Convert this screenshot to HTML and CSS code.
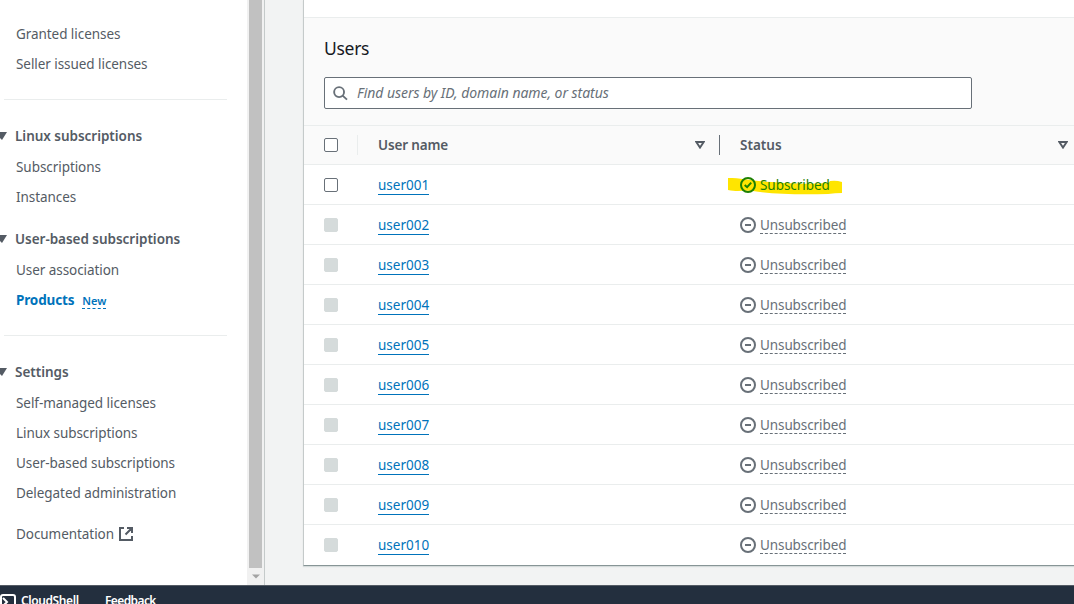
FILE: index.html
```html
<!DOCTYPE html>
<html lang="en">
<head>
<meta charset="utf-8">
<title>License Manager</title>
<link rel="stylesheet" href="styles.css">
</head>
<body>
<svg class="defs" width="0" height="0" aria-hidden="true">
  <symbol id="minus" viewBox="0 0 16 16"><circle cx="8" cy="8" r="7" fill="none" stroke="currentColor" stroke-width="2"/><path d="M5 8h6" stroke="currentColor" stroke-width="2"/></symbol>
  <symbol id="sort" viewBox="0 0 10 8"><path d="M1.3 1h7.4L5 6.6z" fill="none" stroke="currentColor" stroke-width="1.9"/></symbol>
</svg>
<div class="main">
  <aside class="side">
    <nav class="nav">
      <a class="item">Granted licenses</a>
      <a class="item">Seller issued licenses</a>
      <hr class="rule">
      <h3 class="group">Linux subscriptions</h3>
      <a class="item">Subscriptions</a>
      <a class="item">Instances</a>
      <h3 class="group next">User-based subscriptions</h3>
      <a class="item">User association</a>
      <a class="item active">Products <span class="new">New</span></a>
      <hr class="rule">
      <h3 class="group">Settings</h3>
      <a class="item">Self-managed licenses</a>
      <a class="item">Linux subscriptions</a>
      <a class="item">User-based subscriptions</a>
      <a class="item">Delegated administration</a>
      <a class="item docs">Documentation<svg class="ext" viewBox="0 0 14 14" fill="none" stroke="currentColor" stroke-width="2"><path d="M5 1H1v12h12V9M8 1h5v5M13 1L6.5 7.5"/></svg></a>
    </nav>
    <div class="scroll"><div class="thumb"></div><svg class="down" viewBox="0 0 8 5"><path d="M0 .5h8L4 4.5z" fill="#a3a3a3"/></svg></div>
  </aside>
  <main class="content">
    <section class="panel">
      <div class="above"></div>
      <header class="head">
        <h2 class="title">Users</h2>
        <div class="search">
          <svg class="glass" viewBox="0 0 16 16" fill="none" stroke="#687078" stroke-width="2"><circle cx="6.5" cy="6.5" r="5.3"/><path d="M10.3 10.3l4.6 4.3"/></svg>
          <span class="hint">Find users by ID, domain name, or status</span>
        </div>
      </header>
      <div class="row columns">
        <span class="box"></span><span class="split"></span>
        <span class="name">User name</span>
        <svg class="sort"><use href="#sort"/></svg><span class="bar"></span>
        <span class="status-label">Status</span>
        <svg class="sort"><use href="#sort"/></svg>
      </div>
      <div class="row"><span class="box"></span><div class="user"><a class="link">user001</a></div>
        <div class="status ok">
          <svg class="marker" viewBox="0 0 116 19"><path d="M0 1C14 1 24 4 44 5C66 7 82 7 101 6L103 4Q109 3 115 5V16Q108 16 101 17C72 18 43 17 25 14C16 13 10 15 0 13z" fill="#ffe500"/></svg>
          <svg class="icon" viewBox="0 0 16 16" fill="none" stroke="currentColor" stroke-width="2"><circle cx="8" cy="8" r="7"/><path d="M4.7 8l2.4 2.2L11.2 5.6"/></svg>
          <span class="state">Subscribed</span>
        </div></div>
      <div class="row"><span class="box off"></span><div class="user"><a class="link">user002</a></div><div class="status"><svg class="icon"><use href="#minus"/></svg><span class="state dash">Unsubscribed</span></div></div>
      <div class="row"><span class="box off"></span><div class="user"><a class="link">user003</a></div><div class="status"><svg class="icon"><use href="#minus"/></svg><span class="state dash">Unsubscribed</span></div></div>
      <div class="row"><span class="box off"></span><div class="user"><a class="link">user004</a></div><div class="status"><svg class="icon"><use href="#minus"/></svg><span class="state dash">Unsubscribed</span></div></div>
      <div class="row"><span class="box off"></span><div class="user"><a class="link">user005</a></div><div class="status"><svg class="icon"><use href="#minus"/></svg><span class="state dash">Unsubscribed</span></div></div>
      <div class="row"><span class="box off"></span><div class="user"><a class="link">user006</a></div><div class="status"><svg class="icon"><use href="#minus"/></svg><span class="state dash">Unsubscribed</span></div></div>
      <div class="row"><span class="box off"></span><div class="user"><a class="link">user007</a></div><div class="status"><svg class="icon"><use href="#minus"/></svg><span class="state dash">Unsubscribed</span></div></div>
      <div class="row"><span class="box off"></span><div class="user"><a class="link">user008</a></div><div class="status"><svg class="icon"><use href="#minus"/></svg><span class="state dash">Unsubscribed</span></div></div>
      <div class="row"><span class="box off"></span><div class="user"><a class="link">user009</a></div><div class="status"><svg class="icon"><use href="#minus"/></svg><span class="state dash">Unsubscribed</span></div></div>
      <div class="row last"><span class="box off"></span><div class="user"><a class="link">user010</a></div><div class="status"><svg class="icon"><use href="#minus"/></svg><span class="state dash">Unsubscribed</span></div></div>
    </section>
  </main>
</div>
<footer class="foot">
  <svg class="shell" viewBox="0 0 16 16" fill="none" stroke="#fff" stroke-width="2"><rect x="1" y="1" width="14" height="14" rx="2"/><path d="M3 4l4 4-4 4M8 11.5h5"/></svg>
  <span class="cloud">CloudShell</span><span class="feedback">Feedback</span>
</footer>
</body>
</html>
```
FILE: styles.css
```css
* { box-sizing: border-box; }
body { margin: 0; width: 1074px; height: 604px; overflow: hidden; font: 13.5px/20px "Noto Sans", sans-serif; letter-spacing: -.06px; color: #545b64; background: #f2f3f3; }
.defs { position: absolute; }
svg { display: block; flex: none; }
.main { display: flex; height: 585px; }
.side { display: flex; width: 265px; background: #fff; border-right: 1px solid #c5caca; }
.nav { width: 247px; padding-top: 19px; }
.item { display: flex; align-items: center; height: 30px; padding-left: 16px; white-space: nowrap; }
.rule { height: 1px; margin: 20px 20px 21px 4px; border: 0; background: #eaeded; }
.group { display: flex; align-items: center; height: 30px; margin: 0 0 1px; font-size: 13.5px; font-weight: 600; letter-spacing: -.03px; }
.group::before { content: ""; width: 7px; height: 8px; margin-right: 8px; background: #545b64; clip-path: polygon(0 0, 100% 0, 2px 100%, 0 75%); }
.next { margin-top: 12px; }
.active { color: #0073bb; font-weight: 700; letter-spacing: -.15px; }
.new { margin-left: 8px; font-size: 11px; line-height: 14px; margin-top: 3px; border-bottom: 1px dashed #0073bb; letter-spacing: 0; font-weight: 600; }
.docs { margin-top: 11px; }
.ext { width: 14px; height: 14px; margin-left: 5px; }
.scroll { width: 17px; background: #f1f1f1; padding-left: 2px; }
.thumb { width: 13px; height: 568px; background: #c1c1c1; }
.down { width: 8px; height: 5px; margin: 6px 0 0 3px; }
.content { flex: 1; padding-left: 38px; }
.panel { height: 566px; border-left: 1px solid #c5caca; border-bottom: 1px solid #879596; background: #fff; box-shadow: 0 1px 1px #d5dbdb; }
.above { height: 17px; }
.head { height: 108px; padding: 20px 20px 0; background: #fafafa; border-top: 1px solid #eaeded; }
.title { margin: 0; font-size: 17.5px; line-height: 20px; font-weight: 400; letter-spacing: -.3px; color: #16191f; }
.search { display: flex; align-items: center; width: 648px; height: 32px; margin-top: 19px; padding-left: 8px; border: 1px solid #687078; border-radius: 2px; background: #fff; }
.glass { width: 15px; height: 15px; }
.hint { margin-left: 9px; font-size: 14px; letter-spacing: -.05px; font-style: italic; color: #687078; white-space: nowrap; }
.row { display: flex; align-items: center; height: 40px; padding-left: 20px; border-bottom: 1px solid #eaeded; }
.last { border-color: transparent; }
.columns { border-top: 1px solid #eaeded; background: #fafafa; font-weight: 600; padding-right: 6px; letter-spacing: -.15px; }
.box { flex: none; width: 14px; height: 14px; border: 1px solid #687078; border-radius: 2px; background: #fff; }
.off { border-color: #d5dbdb; background: #d5dbdb; }
.split { width: 1px; height: 20px; margin: 0 20px 0 19px; background: #eaeded; }
.name { width: 317px; }
.sort { width: 10px; height: 8px; color: #545b64; }
.bar { width: 1px; height: 20px; margin: 0 20px 0 14px; background: #687078; }
.status-label { flex: 1; letter-spacing: 0; }
.user { width: 362px; margin-left: 40px; }
.link { display: inline-block; line-height: 18px; margin-top: 2px; letter-spacing: 0; color: #0073bb; border-bottom: 1px solid #0073bb; }
.status { display: flex; align-items: center; position: relative; color: #687078; }
.icon { width: 16px; height: 16px; position: relative; }
.state { margin-left: 4px; position: relative; padding-top: 1px; line-height: 17px; }
.dash { line-height: 16px; border-bottom: 1px dashed #687078; margin-top: 1px; letter-spacing: -.1px; }
.ok { color: #1d8102; }
.marker { position: absolute; left: -12px; top: 1px; width: 115px; height: 19px; }
.foot { display: flex; height: 19px; padding-top: 7px; overflow: hidden; border-top: 1px solid #545b64; background: #232f3e; color: #fff; font-size: 12px; line-height: 16px; font-weight: 600; letter-spacing: -.4px; }
.shell { width: 16px; height: 16px; margin-top: 1px; }
.cloud { width: 84px; margin-left: 5px; }
.feedback { letter-spacing: -.6px; }
```
